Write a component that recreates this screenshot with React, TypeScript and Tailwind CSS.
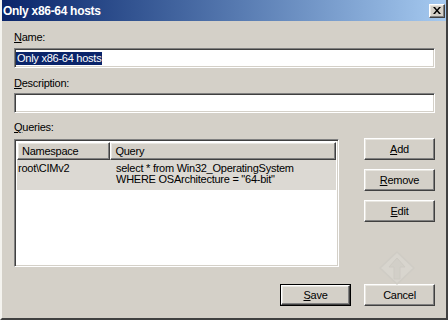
import React from "react";

const raised =
  "border border-t-white border-l-white border-b-[#404040] border-r-[#404040] shadow-[inset_-1px_-1px_0_#808080,inset_1px_1px_0_#e8e6e0]";
const sunken =
  "border border-t-[#808080] border-l-[#808080] border-b-white border-r-white shadow-[inset_1px_1px_0_#404040,inset_-1px_-1px_0_#d4d0c8]";

function Btn({ children, def }: { children: React.ReactNode; def?: boolean }) {
  if (def) {
    return (
      <div className="w-[71px] h-[22px] border border-black">
        <div className={`w-full h-full bg-[#d4d0c8] flex items-center justify-center ${raised}`}>{children}</div>
      </div>
    );
  }
  return (
    <div className={`w-[71px] h-[22px] bg-[#d4d0c8] flex items-center justify-center ${raised}`}>{children}</div>
  );
}

export default function App() {
  return (
    <div className="w-[448px] h-[320px] bg-[#d4d0c8] flex flex-col text-[11px] leading-[13px] tracking-[-0.25px] text-black font-['Liberation_Sans',Arial,sans-serif] border-l-2 border-l-[#f4f3ef] border-r-2 border-r-[#404040] border-b-2 border-b-[#404040] overflow-hidden relative">
      {/* Title bar */}
      <div className="h-[21px] shrink-0 flex items-center justify-between pl-[1px] pr-[1px] bg-linear-to-r from-[#0a246a] to-[#a6caf0]">
        <span className="text-white font-bold text-[12px] leading-none tracking-[-0.3px]">Only x86-64 hosts</span>
        <div className={`w-[16px] h-[14px] bg-[#d4d0c8] flex items-center justify-center ${raised}`}>
          <svg width="8" height="7" viewBox="0 0 8 7">
            <path d="M0 0h2l2 2.5L6 0h2L5 3.5 8 7H6L4 4.5 2 7H0l3-3.5z" fill="#000" />
          </svg>
        </div>
      </div>

      <div className="flex flex-col pl-[12px] pr-[11px]">
        <div className="mt-[10px] h-[13px]">
          <span className="underline">N</span>ame:
        </div>
        <div className={`mt-[4px] h-[20px] bg-white flex items-center pl-[1px] ${sunken}`}>
          <span className="bg-[#0a246a] text-white px-[1px] leading-[13px]">Only x86-64 hosts</span>
        </div>
        <div className="mt-[9px] h-[13px]">
          <span className="underline">D</span>escription:
        </div>
        <div className={`mt-[3px] h-[20px] bg-white ${sunken}`}></div>
        <div className="mt-[8px] h-[13px]">
          <span className="underline">Q</span>ueries:
        </div>

        <div className="mt-[5px] flex justify-between">
          <div className={`w-[325px] h-[128px] bg-white flex flex-col ${sunken} p-[2px]`}>
            <div className="flex h-[18px] shrink-0">
              <div className={`w-[94px] h-full bg-[#d4d0c8] flex items-center pl-[4px] ${raised}`}>Namespace</div>
              <div className={`w-[227px] h-full bg-[#d4d0c8] flex items-center pl-[4px] ${raised}`}>Query</div>
            </div>
            <div className="flex h-[30px] bg-[#dcd9d3] pt-[3px]">
              <div className="w-[94px] pl-[1px] leading-[11px]">root\CIMv2</div>
              <div className="pl-[5px] leading-[11px]">
                <div>select * from Win32_OperatingSystem</div>
                <div>WHERE OSArchitecture = "64-bit"</div>
              </div>
            </div>
          </div>
          <div className="flex flex-col gap-[9px] -mt-[1px]">
            <Btn>
              <span className="underline">A</span>dd
            </Btn>
            <Btn>
              <span>
                <span className="underline">R</span>emove
              </span>
            </Btn>
            <Btn>
              <span>
                <span className="underline">E</span>dit
              </span>
            </Btn>
          </div>
        </div>

        <div className="mt-[17px] flex justify-end gap-[13px]">
          <Btn def>
            <span>
              <span className="underline">S</span>ave
            </span>
          </Btn>
          <Btn>Cancel</Btn>
        </div>
      </div>

      {/* faint watermark */}
      <svg className="absolute left-[376px] top-[250px]" width="38" height="36" viewBox="0 0 38 36">
        <path d="M19 2 L36 18 L19 34 L2 18 Z" fill="#d8d5ce" stroke="#cfccc5" strokeWidth="1.5" strokeLinejoin="round" />
        <path d="M19 8 L27 17 H22 V29 H16 V17 H11 Z" fill="#d2cfc8" stroke="#cdcac3" strokeWidth="1" />
      </svg>
    </div>
  );
}
